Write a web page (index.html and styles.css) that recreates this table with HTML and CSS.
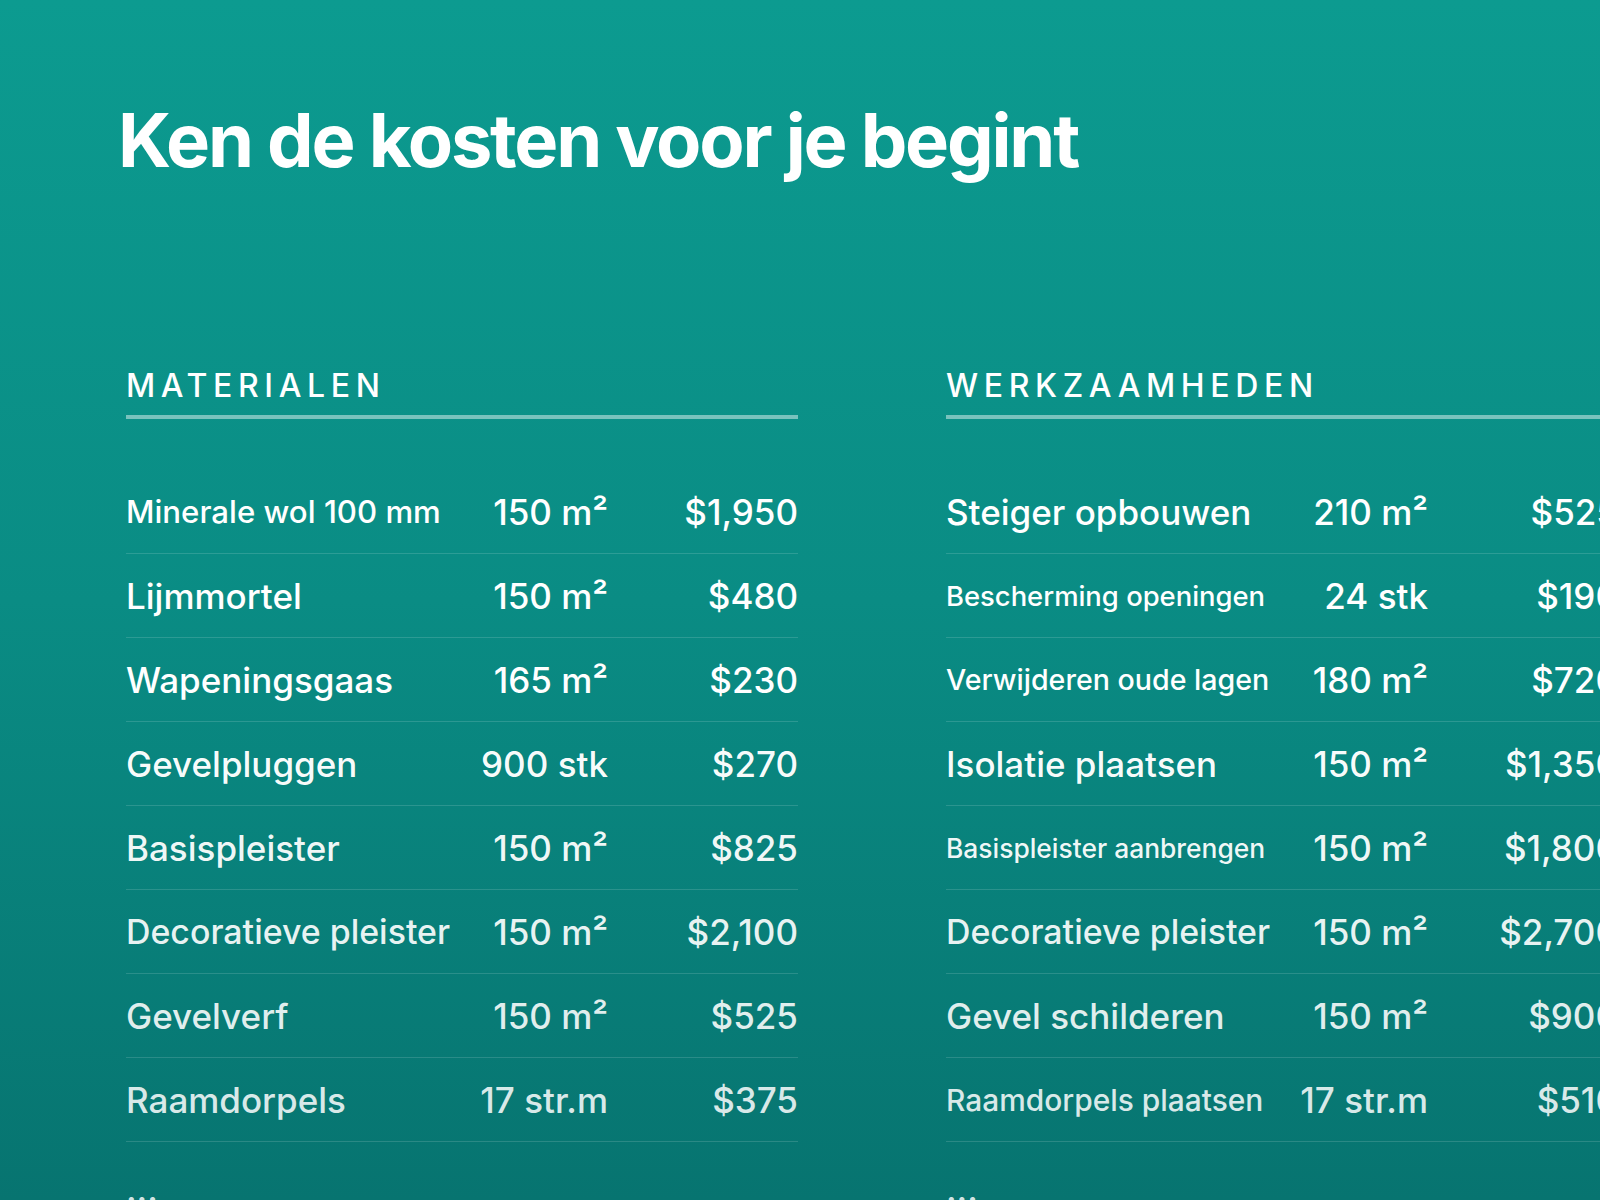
FILE: index.html
```html
<!DOCTYPE html>
<html lang="nl">
<head>
<meta charset="utf-8">
<title>Ken de kosten voor je begint</title>
<link rel="stylesheet" href="styles.css">
</head>
<body>
<main class="page">
  <h1 class="title">Ken de kosten voor je begint</h1>
  <div class="columns">
    <section class="col">
      <h2 class="col-head">MATERIALEN</h2>
      <ul class="rows">
        <li class="row"><span class="name fit-31">Minerale wol 100 mm</span><span class="qty">150 m²</span><span class="price">$1,950</span></li>
        <li class="row"><span class="name">Lijmmortel</span><span class="qty">150 m²</span><span class="price">$480</span></li>
        <li class="row"><span class="name">Wapeningsgaas</span><span class="qty">165 m²</span><span class="price">$230</span></li>
        <li class="row"><span class="name">Gevelpluggen</span><span class="qty">900 stk</span><span class="price">$270</span></li>
        <li class="row"><span class="name">Basispleister</span><span class="qty">150 m²</span><span class="price">$825</span></li>
        <li class="row"><span class="name fit-34">Decoratieve pleister</span><span class="qty">150 m²</span><span class="price">$2,100</span></li>
        <li class="row"><span class="name">Gevelverf</span><span class="qty">150 m²</span><span class="price">$525</span></li>
        <li class="row"><span class="name">Raamdorpels</span><span class="qty">17 str.m</span><span class="price">$375</span></li>
      </ul>
      <div class="more">...</div>
    </section>
    <section class="col">
      <h2 class="col-head">WERKZAAMHEDEN</h2>
      <ul class="rows">
        <li class="row"><span class="name">Steiger opbouwen</span><span class="qty">210 m²</span><span class="price">$525</span></li>
        <li class="row"><span class="name fit-27">Bescherming openingen</span><span class="qty">24 stk</span><span class="price">$190</span></li>
        <li class="row"><span class="name fit-28">Verwijderen oude lagen</span><span class="qty">180 m²</span><span class="price">$720</span></li>
        <li class="row"><span class="name">Isolatie plaatsen</span><span class="qty">150 m²</span><span class="price">$1,350</span></li>
        <li class="row"><span class="name fit-26">Basispleister aanbrengen</span><span class="qty">150 m²</span><span class="price">$1,800</span></li>
        <li class="row"><span class="name fit-34">Decoratieve pleister</span><span class="qty">150 m²</span><span class="price">$2,700</span></li>
        <li class="row"><span class="name">Gevel schilderen</span><span class="qty">150 m²</span><span class="price">$900</span></li>
        <li class="row"><span class="name fit-30">Raamdorpels plaatsen</span><span class="qty">17 str.m</span><span class="price">$510</span></li>
      </ul>
      <div class="more">...</div>
    </section>
  </div>
</main>
</body>
</html>
```

FILE: styles.css
```css
* { box-sizing: border-box; }

html, body {
  margin: 0;
  padding: 0;
}

body {
  width: 1600px;
  height: 1200px;
  overflow: hidden;
  font-family: Inter, "Noto Sans", "Liberation Sans", sans-serif;
  color: #ffffff;
  background: linear-gradient(180deg, #0c9b90 0%, #0a8c84 50%, #077470 100%);
}

.page {
  width: 1600px;
  height: 1200px;
  padding-top: 103px;
}

.title {
  margin: 0 0 0 118px;
  font-size: 74px;
  line-height: 1;
  font-weight: 700;
  letter-spacing: -0.03em;
  white-space: nowrap;
}

.columns {
  display: flex;
  gap: 148px;
  margin: 193px 0 0 126px;
}

.col {
  flex: 0 0 672px;
  width: 672px;
}

.col-head {
  margin: 0;
  padding-bottom: 13px;
  border-bottom: 4px solid rgba(255, 255, 255, 0.45);
  font-size: 32px;
  line-height: 1;
  font-weight: 500;
  letter-spacing: 5.65px;
  white-space: nowrap;
}

.rows {
  list-style: none;
  margin: 51px 0 0;
  padding: 0;
}

.row {
  display: grid;
  grid-template-columns: 1fr 150px 190px;
  align-items: center;
  height: 84px;
  border-bottom: 1px solid rgba(255, 255, 255, 0.14);
  font-size: 35px;
  font-weight: 500;
  white-space: nowrap;
}

.row:nth-child(4) { color: rgba(255, 255, 255, 0.97); }
.row:nth-child(5) { color: rgba(255, 255, 255, 0.94); }
.row:nth-child(6) { color: rgba(255, 255, 255, 0.91); }
.row:nth-child(7) { color: rgba(255, 255, 255, 0.88); }
.row:nth-child(8) { color: rgba(255, 255, 255, 0.86); }

.name { min-width: 0; }
.fit-34 { font-size: 33.9px; }
.fit-31 { font-size: 31.2px; }
.fit-30 { font-size: 29.9px; }
.fit-28 { font-size: 28.6px; }
.fit-27 { font-size: 27.4px; }
.fit-26 { font-size: 26.4px; }

.qty, .price { text-align: right; }

.more {
  padding-top: 30px;
  font-size: 35px;
  font-weight: 500;
  line-height: 1;
  color: rgba(255, 255, 255, 0.84);
}
```
